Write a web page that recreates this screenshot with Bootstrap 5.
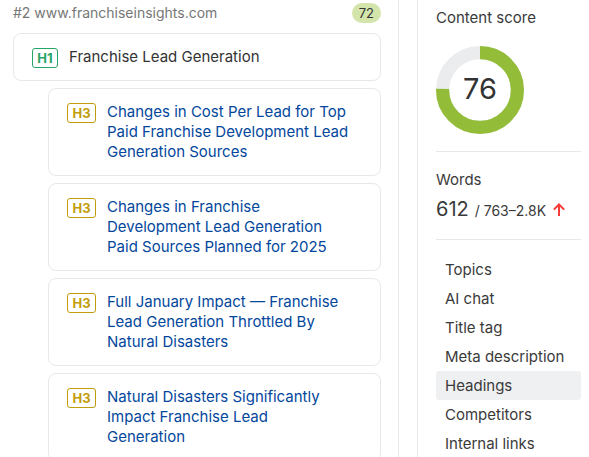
<!DOCTYPE html>
<html lang="en">
<head>
<meta charset="utf-8">
<meta name="viewport" content="width=device-width, initial-scale=1">
<title>Content headings</title>
<link href="https://cdn.jsdelivr.net/npm/bootstrap@5.3.0/dist/css/bootstrap.min.css" rel="stylesheet">
<style>
  body { font-family: Inter, "Liberation Sans", sans-serif; font-size: 15px; line-height: 20px; color: #333; background: #fff; }
  .outline-pane { padding: 3px 17px 0 13px; border-right: 1px solid #e8e8e8; min-width: 0; }
  .side-pane { width: 172px; margin-left: 18px; padding: 8px 8px 0 18px; border-left: 1px solid #e8e8e8; color: #3a3a3a; }
  .source { font-size: 14px; color: #777; }
  .score-pill { background: #d3e5ab; color: #333; font-size: 13px; line-height: 20px; padding: 0 7px; }
  .outline { gap: 7px; margin-top: 10px; }
  .heading-card { border: 1px solid #e8e8e8; border-radius: 8px; padding: 13px 31px 12px 18px; gap: 11px; }
  .heading-sub { margin-left: 35px; padding-bottom: 13px; }
  .heading-sub a { color: #03479c; }
  .level { border: 1px solid; border-radius: 3px; font-size: 13px; font-weight: 700; line-height: 18px; margin-top: 1px; text-align: center; flex: none; }
  .level-1 { color: #27a567; width: 26px; }
  .level-3 { color: #c29d0b; width: 29px; }
  .ring { width: 88px; height: 88px; margin-top: 18px; }
  .ring text { font-size: 29px; fill: #333; }
  .rule { border-top: 1px solid #e8e8e8; margin-top: 17px; }
  .words { padding-top: 18px; }
  .stat { margin-top: 6px; gap: 6px; }
  .count { font-size: 20px; line-height: 26px; }
  .range { font-size: 14px; }
  .trend { margin: 0 0 -2px 1px; }
  .menu { margin-top: 15px; }
  .menu .nav-link { color: #3a3a3a; padding: 4px 9px; line-height: 21px; border-radius: 3px; white-space: nowrap; }
  .menu .nav-link.active { background: #eff0f2; }
</style>
<script src="https://cdn.jsdelivr.net/npm/bootstrap@5.3.0/dist/js/bootstrap.bundle.min.js"></script>
</head>
<body>
<div class="d-flex vh-100 overflow-hidden">
  <main class="outline-pane flex-grow-1">
    <div class="d-flex justify-content-between align-items-center">
      <span class="source">#2 www.franchiseinsights.com</span>
      <span class="score-pill rounded-pill">72</span>
    </div>
    <div class="outline d-flex flex-column">
      <div class="heading-card d-flex align-items-start">
        <span class="level level-1">H1</span><span>Franchise Lead Generation</span>
      </div>
      <div class="heading-card heading-sub d-flex align-items-start">
        <span class="level level-3">H3</span><a class="text-decoration-none" href="#">Changes in Cost Per Lead for Top Paid Franchise Development Lead Generation Sources</a>
      </div>
      <div class="heading-card heading-sub d-flex align-items-start">
        <span class="level level-3">H3</span><a class="text-decoration-none" href="#">Changes in Franchise Development Lead Generation Paid Sources Planned for 2025</a>
      </div>
      <div class="heading-card heading-sub d-flex align-items-start">
        <span class="level level-3">H3</span><a class="text-decoration-none" href="#">Full January Impact — Franchise Lead Generation Throttled By Natural Disasters</a>
      </div>
      <div class="heading-card heading-sub d-flex align-items-start">
        <span class="level level-3">H3</span><a class="text-decoration-none" href="#">Natural Disasters Significantly Impact Franchise Lead Generation</a>
      </div>
    </div>
  </main>
  <aside class="side-pane flex-shrink-0">
    <div>Content score</div>
    <svg class="ring d-block" viewBox="0 0 88 88" role="img" aria-label="Content score 76">
      <circle cx="44" cy="44" r="37.4" fill="none" stroke="#ebecee" stroke-width="13.2"/>
      <circle cx="44" cy="44" r="37.4" fill="none" stroke="#93bd39" stroke-width="13.2" pathLength="100" stroke-dasharray="75.5 100" transform="rotate(-90 44 44)"/>
      <text x="44" y="53" text-anchor="middle">76</text>
    </svg>
    <div class="rule words">
      <div>Words</div>
      <div class="stat d-flex align-items-baseline">
        <span class="count">612</span><span class="range">/ 763–2.8K</span>
        <svg class="trend" width="12" height="13" viewBox="0 0 12 13" fill="none" stroke="#f93a37" stroke-width="2" role="img" aria-label="Below range"><path d="M6 13V1.6M.8 6.6 6 1.5l5.2 5.1"/></svg>
      </div>
    </div>
    <div class="rule"></div>
    <nav class="menu nav flex-column">
      <a class="nav-link" href="#">Topics</a>
      <a class="nav-link" href="#">AI chat</a>
      <a class="nav-link" href="#">Title tag</a>
      <a class="nav-link" href="#">Meta description</a>
      <a class="nav-link active" aria-current="page" href="#">Headings</a>
      <a class="nav-link" href="#">Competitors</a>
      <a class="nav-link" href="#">Internal links</a>
    </nav>
  </aside>
</div>
</body>
</html>
